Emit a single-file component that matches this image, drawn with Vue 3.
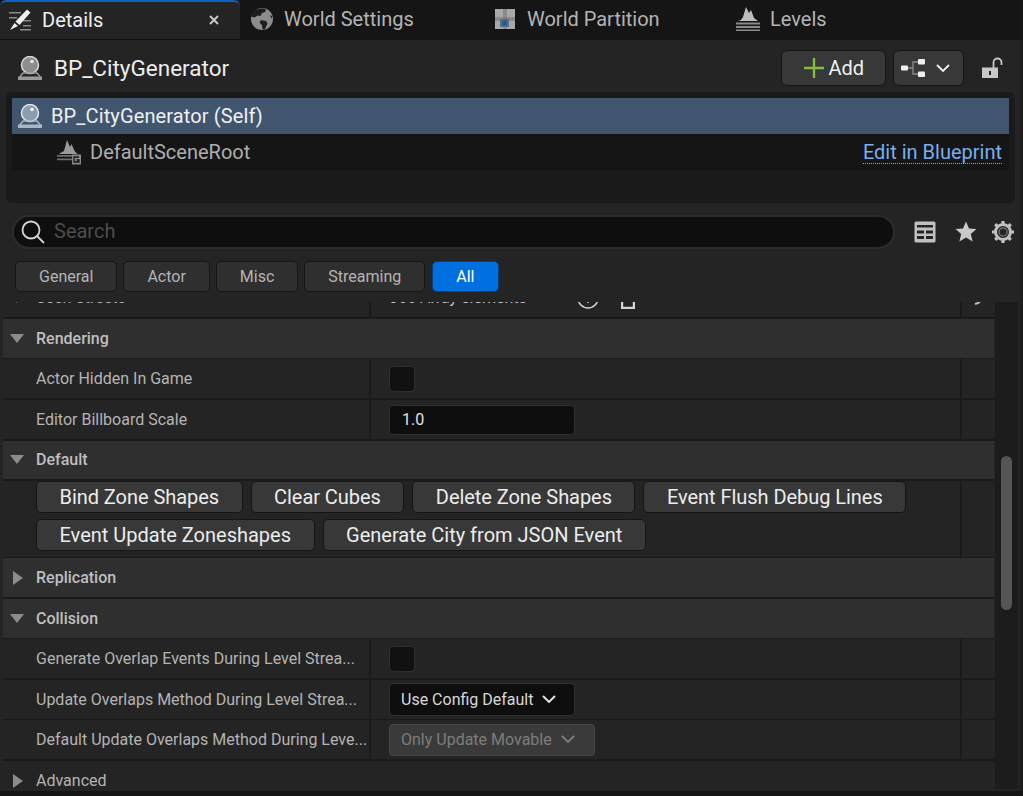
<script setup>
const tabs = [
  { name: 'World Settings', icon: 'globe', w: 243 },
  { name: 'World Partition', icon: 'grid', w: 243 },
  { name: 'Levels', icon: 'levels', w: 200 },
]
const filters = ['General', 'Actor', 'Misc', 'Streaming']
const firstButtons = ['Bind Zone Shapes', 'Clear Cubes', 'Delete Zone Shapes', 'Event Flush Debug Lines']
const secondButtons = ['Event Update Zoneshapes', 'Generate City from JSON Event']
</script>

<template>
  <div class="page">
    <div class="tabbar">
      <div class="tab active">
        <svg class="tabicon" width="24" height="24" viewBox="0 0 24 24">
          <path d="M1 4h12v1.500H1zM1 9h8v1.500H1zM15 17h8v1.500h-8zM12 21h11v1.500H12zM15 12h8v1.500h-8z" fill="#8a8a8a"/>
          <path d="M19 1.500l3.500 3-11 12.500-4-3.500zM6.500 15l3.500 3-8 4z" fill="#f0f0f0"/>
        </svg>
        <span class="tabname activename">Details</span>
        <svg class="close" width="10" height="10" viewBox="0 0 10 10"><path d="M1 1l8 8M9 1l-8 8" stroke="#c8c8c8" stroke-width="2"/></svg>
      </div>
      <div v-for="t in tabs" :key="t.name" class="tab" :style="{ width: t.w + 'px' }">
        <svg v-if="t.icon === 'globe'" class="tabicon" width="24" height="24" viewBox="0 0 24 24">
          <circle cx="12" cy="12" r="11" fill="#8c8c8c"/>
          <path d="M7 2.500c3-1.500 7-1 9 0l-1 2.500-3 1-1.500 3-3-.5-3 2-3.500-1c.5-3 3-6 5.500-7.500zM11 13l5 1 1.500 2.500-2.500 5.500-2.500.5-.5-4.500-2.500-2.500zM20 8l2.500 1.500-1 2z" fill="#1d1d1d"/>
        </svg>
        <svg v-else-if="t.icon === 'grid'" class="tabicon" width="24" height="24" viewBox="0 0 24 24">
          <rect x="2" y="2" width="20" height="20" fill="#a8a8a8"/>
          <path d="M11 2v20M13 2v20M2 11h20M2 13h20" stroke="#6f6f6f" stroke-width="1"/>
          <rect x="7" y="12" width="9" height="8" fill="#5c6b7a"/>
          <rect x="9.500" y="13.500" width="4" height="5" fill="#0f5fb0"/>
        </svg>
        <svg v-else class="tabicon" width="24" height="24" viewBox="0 0 24 24">
          <path d="M2 14l3-1 2-3 3-10 3 6 2-3 3 8 4 3z" fill="#bdbdbd"/>
          <path d="M0 15.500h24v2H0zM0 19h24v2H0zM0 22.500h24v2H0z" fill="#8a8a8a"/>
        </svg>
        <span class="tabname">{{ t.name }}</span>
      </div>
    </div>

    <div class="panel">
      <div class="header">
        <svg class="ball" width="24" height="24" viewBox="0 0 24 24">
          <circle cx="12" cy="9" r="8.500" fill="#8e8e8e" stroke="#d8d8d8" stroke-width="1.500"/>
          <circle cx="14" cy="5.500" r="1.800" fill="#e8e8e8"/>
          <path d="M5 17h14l4 5H1z" fill="none" stroke="#9a9a9a" stroke-width="1.500"/>
          <rect x="0" y="20.500" width="24" height="3.500" fill="#9a9a9a"/>
        </svg>
        <span class="title">BP_CityGenerator</span>
        <span class="spacer"></span>
        <button class="tool add">
          <svg width="20" height="20" viewBox="0 0 20 20"><path d="M10 0v20M0 10h20" stroke="#84bd3f" stroke-width="2.400"/></svg>
          <span>Add</span>
        </button>
        <button class="tool tree">
          <svg width="24" height="20" viewBox="0 0 24 20">
            <path d="M7 10h5M12 10V4h6M12 10v6h6" stroke="#8a8a8a" stroke-width="1.300" fill="none"/>
            <rect x="0" y="7.500" width="7" height="5" rx="1" fill="#f0f0f0"/>
            <rect x="17" y="1" width="7" height="5.500" rx="1" fill="#f0f0f0"/>
            <rect x="17" y="13.500" width="7" height="5.500" rx="1" fill="#f0f0f0"/>
          </svg>
          <svg width="14" height="10" viewBox="0 0 14 10"><path d="M1 2l6 6 6-6" stroke="#f0f0f0" stroke-width="1.800" fill="none"/></svg>
        </button>
        <svg class="lock" width="21" height="22" viewBox="0 0 21 22">
          <path d="M11.500 11V5.500a4 4 0 0 1 8 0V8" fill="none" stroke="#c8c8c8" stroke-width="1.800"/>
          <path d="M0 10.500h16V21H0z" fill="#c8c8c8"/>
          <rect x="7" y="14" width="2" height="4" fill="#242424"/>
        </svg>
      </div>

      <div class="treebox">
        <div class="treerow selected">
          <svg width="24" height="24" viewBox="0 0 24 24">
            <circle cx="12" cy="9" r="8.500" fill="#8d9db0" stroke="#dfe5ec" stroke-width="1.500"/>
            <circle cx="14" cy="5.500" r="1.800" fill="#eef2f6"/>
            <path d="M5 17h14l4 5H1z" fill="none" stroke="#a9b6c4" stroke-width="1.500"/>
            <rect x="0" y="20.500" width="24" height="3.500" fill="#a9b6c4"/>
          </svg>
          <span class="selfname">BP_CityGenerator (Self)</span>
        </div>
        <div class="treerow child">
          <svg width="24" height="26" viewBox="0 0 24 26">
            <path d="M2 15l3-2 2-1 3-11 3 7 1.500-3 3 7 3 3z" fill="#9a9a9a"/>
            <path d="M0 16h15v1.800H0zM0 19.500h15v1.800H0z" fill="#6e6e6e"/>
            <path d="M15 15.500h9v10h-9z" fill="#8a8a8a"/>
            <path d="M22 18h-5v5h5v-2h-2.500" fill="none" stroke="#151515" stroke-width="1.300"/>
          </svg>
          <span class="childname">DefaultSceneRoot</span>
          <span class="spacer"></span>
          <a class="link">Edit in Blueprint</a>
        </div>
      </div>

      <div class="searchrow">
        <div class="search">
          <svg width="24" height="24" viewBox="0 0 24 24"><circle cx="10" cy="10" r="8.500" fill="none" stroke="#d4d4d4" stroke-width="1.800"/><path d="M16 16l7 7" stroke="#d4d4d4" stroke-width="1.800"/></svg>
          <span class="searchtext">Search</span>
        </div>
        <svg class="sicon first" width="22" height="22" viewBox="0 0 22 22">
          <rect x="0.500" y="0.500" width="21" height="21" rx="1.500" fill="#c0c0c0"/>
          <path d="M3 4h16v2.500H3zM3 9.500h7v3H3zM12 9.500h7v3h-7zM3 15h7v3H3zM12 15h7v3h-7z" fill="#242424"/>
        </svg>
        <svg class="sicon star" width="22" height="22" viewBox="0 0 22 22"><path d="M11 0.500l3 7 7.500.6-5.700 5 1.800 7.400-6.600-4-6.600 4 1.800-7.400-5.700-5L8 7.500z" fill="#c8c8c8"/></svg>
        <svg class="sicon gear" width="24" height="24" viewBox="0 0 24 24">
          <circle cx="12" cy="12" r="7.500" fill="none" stroke="#c0c0c0" stroke-width="3"/>
          <path d="M12 1v4M12 19v4M1 12h4M19 12h4M4.200 4.200l2.800 2.800M17 17l2.800 2.800M19.800 4.200L17 7M7 17l-2.800 2.800" stroke="#c0c0c0" stroke-width="3.200"/>
          <circle cx="12" cy="12" r="4" fill="none" stroke="#6e6e6e" stroke-width="1.500"/>
        </svg>
      </div>

      <div class="filters">
        <button v-for="f in filters" :key="f" class="filter">{{ f }}</button>
        <button class="filter on">All</button>
      </div>

      <div class="scrollwrap">
        <div class="scroll">
          <div class="list">
            <div class="row clipped line2">
              <div class="name"><span class="small"></span>Seen Streets</div>
              <div class="value">
                <span class="arr">366 Array elements</span>
                <svg class="plus" width="22" height="22" viewBox="0 0 22 22"><circle cx="11" cy="11" r="10" fill="none" stroke="#d4d4d4" stroke-width="1.500"/><path d="M11 6v10M6 11h10" stroke="#d4d4d4" stroke-width="1.500"/></svg>
                <svg class="bin" width="14" height="22" viewBox="0 0 14 22"><path d="M1 4h12v17H1z" fill="none" stroke="#d4d4d4" stroke-width="2.400"/></svg>
              </div>
              <div class="reset"><svg width="10" height="10" viewBox="0 0 10 10"><path d="M9 0C9 4 6 8 1 9" stroke="#bdbdbd" stroke-width="2" fill="none"/></svg></div>
            </div>

            <div class="section line1"><span class="open"></span>Rendering</div>
            <div class="row line2">
              <div class="name">Actor Hidden In Game</div>
              <div class="value"><span class="check"></span></div>
              <div class="reset"></div>
            </div>
            <div class="row line2">
              <div class="name">Editor Billboard Scale</div>
              <div class="value"><span class="input">1.0</span></div>
              <div class="reset"></div>
            </div>

            <div class="section short line2"><span class="open"></span>Default</div>
            <div class="row buttons line1">
              <div class="btncell">
                <div class="btnline"><button v-for="b in firstButtons" :key="b" class="bp">{{ b }}</button></div>
                <div class="btnline two"><button v-for="b in secondButtons" :key="b" class="bp">{{ b }}</button></div>
              </div>
              <div class="reset"></div>
            </div>

            <div class="section line2"><span class="closed"></span>Replication</div>
            <div class="section line1"><span class="open"></span>Collision</div>
            <div class="row line2">
              <div class="name">Generate Overlap Events During Level Strea...</div>
              <div class="value"><span class="check"></span></div>
              <div class="reset"></div>
            </div>
            <div class="row line1">
              <div class="name">Update Overlaps Method During Level Strea...</div>
              <div class="value">
                <span class="input select">Use Config Default
                  <svg width="14" height="9" viewBox="0 0 14 9"><path d="M1 1l6 6 6-6" stroke="#e8e8e8" stroke-width="1.900" fill="none"/></svg>
                </span>
              </div>
              <div class="reset"></div>
            </div>
            <div class="row line2">
              <div class="name">Default Update Overlaps Method During Leve...</div>
              <div class="value">
                <span class="input select disabled">Only Update Movable
                  <svg width="14" height="9" viewBox="0 0 14 9"><path d="M1 1l6 6 6-6" stroke="#7d7d7d" stroke-width="1.900" fill="none"/></svg>
                </span>
              </div>
              <div class="reset"></div>
            </div>
            <div class="section advanced"><span class="closed"></span>Advanced</div>
          </div>
        </div>
        <div class="track"><div class="thumb"></div></div>
      </div>
    </div>
  </div>
</template>

<style>
html, body { margin: 0; background: #151515; overflow: hidden; }
</style>

<style scoped>
.page { width: 1023px; height: 796px; background: #151515; font-family: Roboto, "Liberation Sans", sans-serif; overflow: hidden; box-sizing: border-box; }
.tabbar { height: 40px; display: flex; align-items: stretch; box-sizing: border-box; }
.tab { display: flex; align-items: center; gap: 10px; box-sizing: border-box; padding: 0 0 3px 10px; flex: none; }
.tab.active { width: 240px; background: #242424; border-top: 2px solid #0a62c4; border-radius: 6px 6px 0 0; padding: 0 21px 2px 8px; margin-bottom: 1px; box-shadow: 0 1px 0 #111; }
.tabname { font-size: 20px; color: #b4b4b4; white-space: nowrap; }
.activename { color: #efefef; flex: 1; }
.panel { height: 751px; background: #242424; border-right: 3px solid #1c1c1c; box-sizing: border-box; }
.header { height: 52px; display: flex; align-items: center; padding: 3px 17px 0 18px; box-sizing: border-box; }
.title { font-size: 22.5px; color: #ededed; margin-left: 12px; }
.spacer { flex: 1; }
.tool { height: 36px; background: #383838; border: 1.500px solid #151515; border-radius: 6px; display: flex; align-items: center; box-sizing: border-box; padding: 0; }
.add { width: 105px; gap: 5px; padding-left: 21.500px; color: #efefef; font: 20px Roboto, sans-serif; }
.tree { width: 71px; margin-left: 7px; gap: 11px; padding-left: 6.500px; }
.lock { margin-left: 18px; }
.treebox { margin: 0 5px 0 6px; height: 111px; background: #1a1a1a; border-radius: 6px; padding: 6px 6px 0; box-sizing: border-box; }
.treerow { height: 36px; display: flex; align-items: center; font-size: 20px; }
.selected { background: #41566e; color: #eef1f4; padding-left: 6px; gap: 9px; }
.selfname { letter-spacing: 0.13px; }
.child { background: #151515; color: #aeaeae; padding: 0 7px 0 45px; }
.childname { margin-left: 9px; }
.link { color: #79aef0; border-bottom: 1px dotted #79aef0; line-height: 22px; }
.searchrow { height: 58px; display: flex; align-items: center; padding: 0 0 0 12px; box-sizing: border-box; }
.search { width: 883px; height: 34px; border-radius: 17px; background: #0e0e0e; border: 2px solid #2c2c2c; box-sizing: border-box; display: flex; align-items: center; gap: 9px; padding-left: 7px; font-size: 20px; color: #4c4c4c; }
.searchtext { margin-bottom: 3px; }
.sicon { flex: none; }
.first { margin-left: 19px; }
.star { margin-left: 19px; }
.gear { margin-left: 14px; }
.filters { display: flex; gap: 6px; padding: 0 0 0 15px; height: 41px; box-sizing: border-box; }
.filter { height: 31px; border-radius: 5px; border: 1.500px solid #151515; background: #2f2f2f; color: #b4b4b4; font: 16px Roboto, sans-serif; padding: 0 23px; }
.filter.on { background: #0070e0; color: #fff; border-color: #0a3f7d; margin-left: 1px; }
.scrollwrap { height: 488px; display: flex; padding-left: 3px; box-sizing: border-box; }
.scroll { width: 992px; overflow: hidden; }
.list { margin-top: -24px; }
.line1 { border-bottom: 1px solid #1a1a1a; }
.line2 { border-bottom: 2px solid #1a1a1a; }
.row { display: grid; grid-template-columns: 366px 593px 33px; height: 39px; background: #242424; }
.name { display: flex; align-items: center; padding-left: 33px; font-size: 16px; color: #b4b4b4; white-space: nowrap; overflow: hidden; }
.value { display: flex; align-items: center; padding-left: 18px; border-left: 2px solid #1a1a1a; border-right: 2px solid #1a1a1a; box-sizing: border-box; font-size: 16px; color: #e2e2e2; }
.arr { width: 188px; color: #c8c8c8; }
.bin { margin-left: 22px; }
.reset { display: flex; align-items: flex-end; justify-content: center; padding-bottom: 12px; box-sizing: border-box; }
.small { width: 0; height: 0; margin-left: -20px; margin-right: 14px; border-left: 6px solid #888; border-top: 5px solid transparent; border-bottom: 5px solid transparent; }
.section { height: 40px; width: 991px; background: #2f2f2f; display: flex; align-items: center; padding-left: 33px; box-sizing: border-box; font-size: 16px; font-weight: 500; color: #bfbfbf; }
.section.line2 { height: 41px; }
.section.short { height: 40px; padding-bottom: 2px; }
.open, .closed { width: 0; height: 0; flex: none; }
.open { border-left: 7.500px solid transparent; border-right: 7.500px solid transparent; border-top: 9px solid #8c8c8c; margin-left: -26px; margin-right: 12px; }
.closed { border-top: 7.500px solid transparent; border-bottom: 7.500px solid transparent; border-left: 10px solid #8c8c8c; margin-left: -23px; margin-right: 13px; }
.advanced { background: #242424; font-weight: 400; height: 39px; flex: none; color: #b4b4b4; }
.check { width: 26px; height: 26px; background: #111; border: 1.500px solid #2f2f2f; border-radius: 4px; box-sizing: border-box; }
.input { width: 186px; height: 30px; background: #0e0e0e; border: 1.500px solid #2f2f2f; border-radius: 4px; box-sizing: border-box; display: flex; align-items: center; padding-left: 12px; gap: 9px; }
.select { height: 33px; padding-left: 11px; color: #d8d8d8; white-space: nowrap; }
.disabled { width: 206px; height: 32px; background: #3a3a3a; border-color: #454545; color: #7d7d7d; }
.buttons { height: 76px; grid-template-columns: 959px 33px; }
.btncell { border-right: 2px solid #1a1a1a; padding: 0 0 0 33px; display: flex; flex-direction: column; gap: 6px; box-sizing: border-box; }
.btnline { display: flex; gap: 8px; }
.bp { height: 32px; padding: 0 22.500px; background: #383838; color: #ececec; border: 1.500px solid #151515; border-radius: 5px; font: 20px Roboto, sans-serif; letter-spacing: -0.05px; white-space: nowrap; }
.two .bp { letter-spacing: 0; }
.track { width: 23px; height: 487px; background: #1c1c1c; position: relative; }
.thumb { position: absolute; left: 6px; top: 154px; width: 11px; height: 154px; border-radius: 6px; background: #555; }
</style>
